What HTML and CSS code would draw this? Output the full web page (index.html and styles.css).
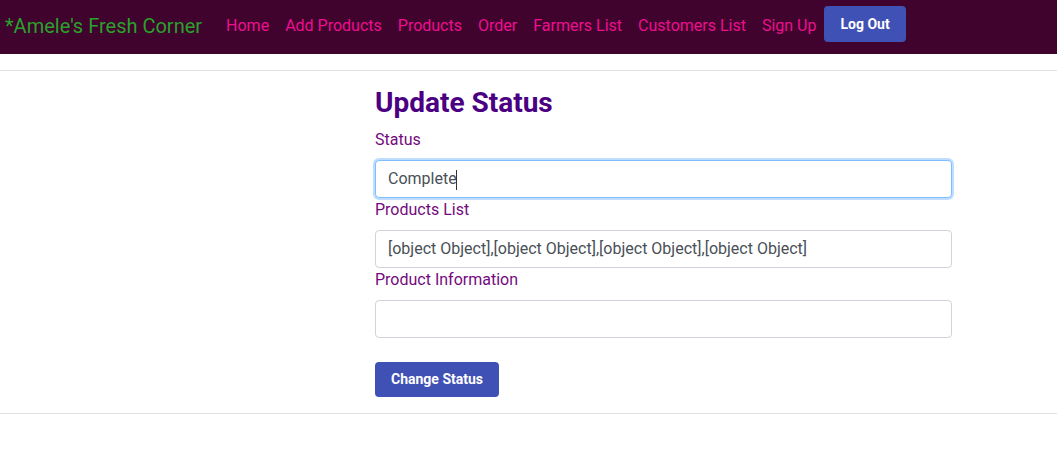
FILE: index.html
```html
<!DOCTYPE html>
<html lang="en">
<head>
<meta charset="utf-8">
<title>Update Status</title>
<link rel="stylesheet" href="styles.css">
</head>
<body>
<nav class="navbar">
  <a class="brand" href="#">*Amele's Fresh Corner</a>
  <ul class="nav-links">
    <li><a href="#">Home</a></li>
    <li><a href="#">Add Products</a></li>
    <li><a href="#">Products</a></li>
    <li><a href="#">Order</a></li>
    <li><a href="#">Farmers List</a></li>
    <li><a href="#">Customers List</a></li>
    <li><a href="#">Sign Up</a></li>
  </ul>
  <button class="btn btn-nav" type="button">Log Out</button>
</nav>
<hr class="rule rule-top">
<main class="content">
  <form class="status-form">
    <h3 class="title">Update Status</h3>
    <label class="label" for="status">Status</label>
    <div class="field-wrap">
      <input id="status" class="field field-focus" type="text" value="Complete">
      <span class="caret"></span>
    </div>
    <label class="label" for="products">Products List</label>
    <input id="products" class="field" type="text" value="[object Object],[object Object],[object Object],[object Object]">
    <label class="label" for="info">Product Information</label>
    <input id="info" class="field" type="text" value="">
    <button class="btn btn-submit" type="button">Change Status</button>
  </form>
</main>
<hr class="rule">
</body>
</html>
```
FILE: styles.css
```css
* { box-sizing: border-box; }
html, body { margin: 0; padding: 0; }
body {
  font-family: Roboto, "Liberation Sans", Arial, sans-serif;
  background: #fff;
  color: #212529;
}
.navbar {
  display: flex;
  align-items: center;
  height: 54px;
  background: #40032e;
  padding: 0 0 0 5px;
}
.brand {
  font-size: 20px;
  color: #2aa12a;
  text-decoration: none;
  margin-right: 16px;
  position: relative;
  top: -1px;
}
.nav-links {
  display: flex;
  list-style: none;
  margin: 0;
  padding: 0;
  position: relative;
  top: -2px;
}
.nav-links a {
  display: block;
  padding: 0 8px;
  font-size: 16px;
  color: #ee0e8e;
  text-decoration: none;
}
.btn {
  font-family: Roboto, "Liberation Sans", Arial, sans-serif;
  font-weight: 700;
  font-size: 14px;
  color: #fff;
  background: #3f51b5;
  border: none;
  border-radius: 4px;
  padding: 0 16px;
}
.btn-nav {
  height: 36px;
  margin-top: -6px;
}
.rule {
  margin: 16px 0;
  border: 0;
  border-top: 1px solid #e2e2e2;
}
.rule-top {
  margin-bottom: 15px;
}
.content {
  display: flex;
  padding-left: 375px;
}
.status-form {
  width: 577px;
  display: flex;
  flex-direction: column;
  align-items: flex-start;
}
.title {
  margin: 0 0 8px;
  font-size: 28px;
  font-weight: 700;
  line-height: 1.2;
  color: #4b0082;
}
.label {
  display: block;
  font-size: 16px;
  line-height: 24px;
  color: #740a7e;
  margin-bottom: 8px;
}
.field-wrap {
  position: relative;
  width: 100%;
}
.field {
  display: block;
  width: 100%;
  height: 38px;
  padding: 6px 12px;
  font-family: Roboto, "Liberation Sans", Arial, sans-serif;
  font-size: 16px;
  line-height: 24px;
  color: #495057;
  background: #fff;
  border: 1px solid #ced4da;
  border-radius: 4px;
  outline: none;
}
.field-focus {
  border-color: #80bdff;
  box-shadow: 0 0 0 2px rgba(0, 123, 255, 0.25);
}
.caret {
  position: absolute;
  left: 81px;
  top: 10px;
  width: 1px;
  height: 20px;
  background: #333;
}
.btn-submit {
  margin-top: 24px;
  height: 35px;
  padding: 0 16px;
}
```
